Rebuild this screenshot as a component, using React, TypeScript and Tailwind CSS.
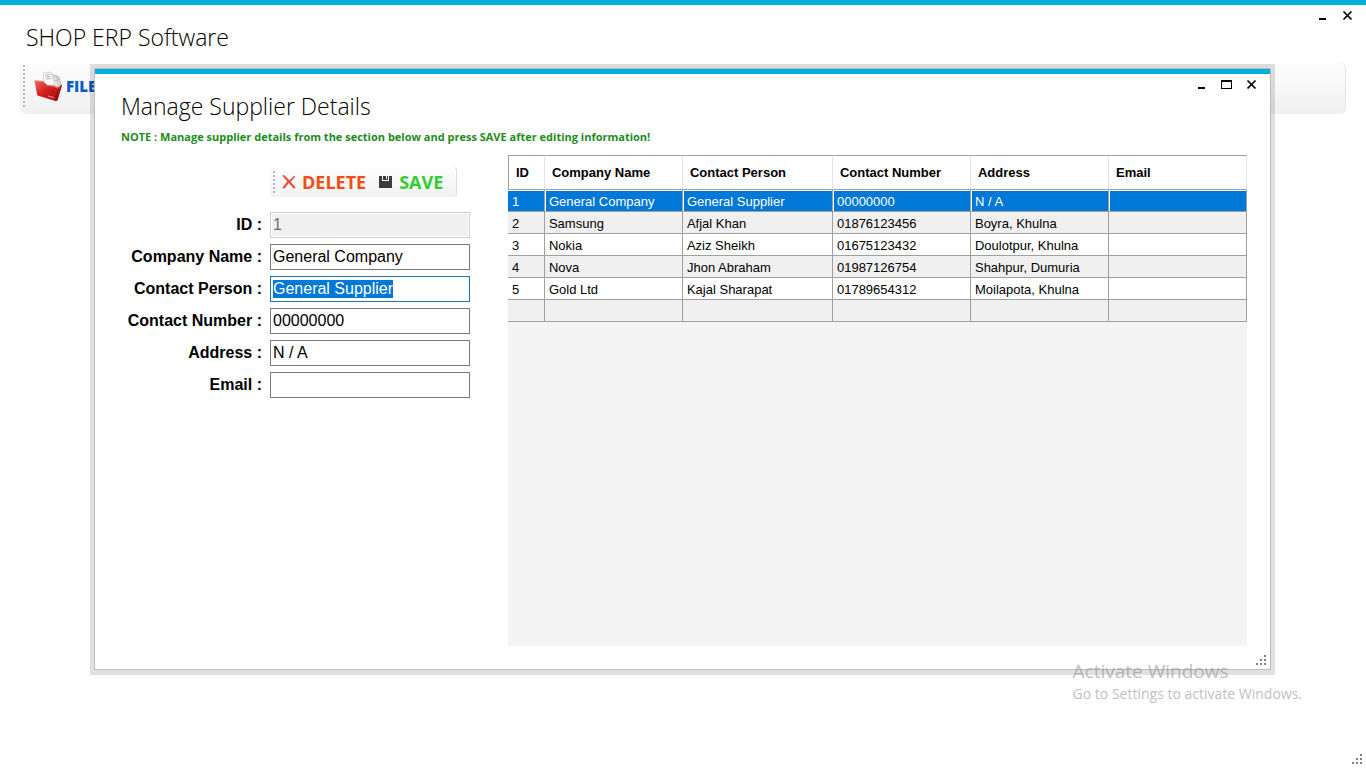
import React, { useEffect, useRef } from 'react';

interface Supplier {
    id: string;
    company: string;
    person: string;
    phone: string;
    address: string;
    email: string;
}

const suppliers: Supplier[] = [
    { id: '1', company: 'General Company', person: 'General Supplier', phone: '00000000', address: 'N / A', email: '' },
    { id: '2', company: 'Samsung', person: 'Afjal Khan', phone: '01876123456', address: 'Boyra, Khulna', email: '' },
    { id: '3', company: 'Nokia', person: 'Aziz Sheikh', phone: '01675123432', address: 'Doulotpur, Khulna', email: '' },
    { id: '4', company: 'Nova', person: 'Jhon Abraham', phone: '01987126754', address: 'Shahpur, Dumuria', email: '' },
    { id: '5', company: 'Gold Ltd', person: 'Kajal Sharapat', phone: '01789654312', address: 'Moilapota, Khulna', email: '' },
    { id: '', company: '', person: '', phone: '', address: '', email: '' },
];

const columns: { key: keyof Supplier; title: string; width: string }[] = [
    { key: 'id', title: 'ID', width: 'w-[5%]' },
    { key: 'company', title: 'Company Name', width: '' },
    { key: 'person', title: 'Contact Person', width: 'w-[150px]' },
    { key: 'phone', title: 'Contact Number', width: '' },
    { key: 'address', title: 'Address', width: '' },
    { key: 'email', title: 'Email', width: '' },
];

const fields: { key: keyof Supplier; label: string }[] = [
    { key: 'id', label: 'ID :' },
    { key: 'company', label: 'Company Name :' },
    { key: 'person', label: 'Contact Person :' },
    { key: 'phone', label: 'Contact Number :' },
    { key: 'address', label: 'Address :' },
    { key: 'email', label: 'Email :' },
];

const MinimizeIcon = () => (
    <svg width="11" height="11" viewBox="0 0 11 11" shapeRendering="crispEdges">
        <rect x="2" y="8" width="7" height="2" fill="#000" />
    </svg>
);

const MaximizeIcon = () => (
    <svg width="11" height="11" viewBox="0 0 11 11" shapeRendering="crispEdges">
        <path d="M0 1h11v9H0zM1 3v6h9V3z" fill="#000" fillRule="evenodd" />
    </svg>
);

const CloseIcon = () => (
    <svg width="11" height="11" viewBox="0 0 11 11">
        <path d="M1.5 1.5l8 8M9.5 1.5l-8 8" stroke="#000" strokeWidth="1.7" />
    </svg>
);

const ResizeGrip: React.FC<{ className: string }> = ({ className }) => (
    <svg className={className} width="10" height="10" viewBox="0 0 10 10" fill="#808080" shapeRendering="crispEdges">
        <path d="M8 0h2v2H8zM4 4h2v2H4zM8 4h2v2H8zM0 8h2v2H0zM4 8h2v2H4zM8 8h2v2H8z" />
    </svg>
);

const FolderIcon = () => (
    <svg width="30" height="32" viewBox="0 0 30 32">
        <defs>
            <linearGradient id="folder" x1="0" y1="0" x2="1" y2="1">
                <stop offset="0" stopColor="#ef6a62" />
                <stop offset="0.45" stopColor="#d41f1f" />
                <stop offset="1" stopColor="#9c0b0f" />
            </linearGradient>
        </defs>
        <path d="M19 11l8 3 .5 2-4 14.500-5-3z" fill="#5d1214" />
        <path d="M20 5l5 2 2.500 9-3.500 6-6-3z" fill="#dedad9" stroke="#a8a3a2" strokeWidth="0.6" />
        <path d="M16 4l6 1.500 2.500 12-6 2-5-4z" fill="#eeebea" stroke="#a8a3a2" strokeWidth="0.6" />
        <path d="M9.500 3l7.500-.8 4.500 15-4 .8-8-4z" fill="#fafafa" stroke="#b9b5b4" strokeWidth="0.6" />
        <path d="M11.500 5l4-.5M11.500 7l5-.6M12 9l5-.6M19.500 7l2 .6M20.500 10l2 .5M24 9l1 .4" stroke="#8f8b8a" strokeWidth="0.7" />
        <path d="M0.400 10.500L9 11l4.500 4 6 .6 5 2 3-3.100c.5.500.5 1 .3 1.600L23.500 30c-.3 1-1 1.300-2 1L4.300 25.800c-.7-.2-1-.6-1.200-1.300z" fill="url(#folder)" />
        <path d="M0.800 10.900L9 11.600l4.500 4 6 .8 5 2" fill="none" stroke="#f59a94" strokeWidth="0.7" />
        <path d="M14 26l6 1.500" stroke="#f3b5b1" strokeWidth="0.8" />
        <path d="M24.500 18.500l-2.800 11.800" stroke="#7d0a0d" strokeWidth="0.8" />
    </svg>
);

const DeleteIcon = () => (
    <svg width="14" height="14" viewBox="0 0 14 14">
        <path d="M0.500 0.600L2.400 0.500 7.300 5.600 12 1.200l1 .6-4.600 5 4.900 5.700-1.400.9-5-5.600-4.500 5.500-1.900-.4 5-6.300z" fill="#e5492f" stroke="#e5492f" strokeWidth="0.4" />
    </svg>
);

const SaveIcon = () => (
    <svg width="13" height="13" viewBox="0 0 13 13" fill="#3c3c3c" shapeRendering="crispEdges">
        <path d="M0 0h3v5h7V0h2l1 1v11H0z" />
        <path d="M4 0h3v4H4zM8 0h1v4H7V3h1z" />
    </svg>
);

const grip = 'w-[2px] bg-[repeating-linear-gradient(#b8b8b8_0_2px,transparent_2px_4px)]';

const DialogForm: React.FC = () => {
    const personRef = useRef<HTMLInputElement>(null);

    useEffect(() => {
        personRef.current?.focus();
        personRef.current?.select();
    }, []);

    return (
        <form className="grid grid-cols-[auto_200px] gap-x-2 gap-y-[6px] items-center content-start pt-3" onSubmit={(e) => e.preventDefault()}>
            <div className="col-start-2 justify-self-start flex items-center h-[30px] pl-[3px] pr-[13px] mb-[9px] rounded bg-linear-to-b from-[#fdfdfd] to-[#f2f2f2] border-r border-[#dddddd] font-['Open_Sans',sans-serif] text-lg font-bold">
                <div className={`h-[22px] mr-[7px] ${grip}`}></div>
                <button type="button" className="flex items-center gap-[6px] mr-[13px] text-[#f04e14]">
                    <DeleteIcon />
                    DELETE
                </button>
                <button type="submit" className="flex items-center gap-[7px] text-[#32cd32]">
                    <SaveIcon />
                    SAVE
                </button>
            </div>
            {fields.map((f) => (
                <React.Fragment key={f.key}>
                    <label htmlFor={f.key} className="w-[141px] text-right text-base font-bold whitespace-nowrap">{f.label}</label>
                    <input
                        id={f.key}
                        ref={f.key === 'person' ? personRef : undefined}
                        defaultValue={suppliers[0][f.key]}
                        disabled={f.key === 'id'}
                        className="w-full h-[26px] px-[2px] text-base bg-white border border-[#7a7a7a] outline-none focus:border-[#1a7ba8] selection:bg-[#0078d7] selection:text-white disabled:bg-[#f0f0f0] disabled:border-[#cccccc] disabled:text-[#6d6d6d] disabled:shadow-[inset_0_0_0_1px_#fff]"
                    />
                </React.Fragment>
            ))}
        </form>
    );
};

const SupplierTable: React.FC = () => (
    <div className="flex-1 bg-[#f4f4f4]">
        <table className="w-full table-fixed border-separate border-spacing-0 text-[13px] leading-4">
            <thead>
                <tr className="h-[35px] bg-white">
                    {columns.map((c) => (
                        <th key={c.key} className={`${c.width} px-[7px] text-left font-bold whitespace-nowrap border-y border-r border-y-[#a0a0a0] border-r-[#e2e4e8] first:border-l first:border-l-[#a0a0a0]`}>
                            {c.title}
                        </th>
                    ))}
                </tr>
            </thead>
            <tbody>
                {suppliers.map((s, i) => (
                    <tr key={i} className={i === 0 ? 'h-[22px] bg-[#0078d7] text-white' : 'h-[22px] bg-white even:bg-[#f0f0f0]'}>
                        {columns.map((c) => (
                            <td
                                key={c.key}
                                className={`px-1 pt-[2px] pb-0 whitespace-nowrap border-b border-r border-[#a0a0a0] ${i === 0 ? 'shadow-[inset_1px_1px_0_#fff] first:shadow-[inset_0_1px_0_#fff]' : ''}`}
                            >
                                {s[c.key]}
                            </td>
                        ))}
                    </tr>
                ))}
            </tbody>
        </table>
    </div>
);

const SupplierDialog: React.FC = () => (
    <div role="dialog" aria-labelledby="dialog-title" className="absolute top-16 bottom-[93px] left-[90px] right-[91px] border-4 border-b-[5px] border-black/12">
        <div className="relative h-full flex flex-col bg-white border border-[#bdbdbd]">
            <div className="h-[5px] bg-[#00aedb]"></div>
            <div className="flex justify-between pl-[26px] pr-[13px]">
                <h2 id="dialog-title" className="pt-4 text-[23px] leading-8 font-light font-['Open_Sans',sans-serif]">Manage Supplier Details</h2>
                <div className="flex items-start gap-[14px] pt-[5px]">
                    <button aria-label="Minimize"><MinimizeIcon /></button>
                    <button aria-label="Maximize"><MaximizeIcon /></button>
                    <button aria-label="Close"><CloseIcon /></button>
                </div>
            </div>
            <p className="pl-[26px] pt-[5px] text-[11px] leading-5 font-bold text-[#228b22] font-['Open_Sans',sans-serif]">
                NOTE : Manage supplier details from the section below and press SAVE after editing information!
            </p>
            <div className="flex-1 flex gap-[38px] pl-[26px] pr-[23px] pt-2 pb-[23px]">
                <DialogForm />
                <SupplierTable />
            </div>
            <ResizeGrip className="absolute right-1 bottom-1" />
        </div>
    </div>
);

const App: React.FC = () => {
    return (
        <div className="relative min-h-screen overflow-hidden bg-white text-black font-['Liberation_Sans',sans-serif]">
            <div className="h-[5px] bg-[#00aedb]"></div>
            <header className="flex justify-between pl-[26px] pr-[13px]">
                <h1 className="pt-4 text-[23px] leading-8 font-light font-['Open_Sans',sans-serif]">SHOP ERP Software</h1>
                <div className="flex items-start gap-[14px] pt-[5px]">
                    <button aria-label="Minimize"><MinimizeIcon /></button>
                    <button aria-label="Close"><CloseIcon /></button>
                </div>
            </header>
            <nav className="flex items-center h-[52px] mt-[9px] mx-5 pl-[3px] pb-1 rounded-md bg-linear-to-b from-[#fdfdfd] via-[#f7f7f7] to-[#f0f0f0] border-r border-[#e4e4e4]">
                <div className={`h-[42px] mr-[9px] ${grip}`}></div>
                <button className="flex items-center gap-[2px] text-[15px] font-extrabold text-[#0a5cc4] font-['Open_Sans',sans-serif]">
                    <FolderIcon />
                    FILE
                </button>
            </nav>

            <SupplierDialog />

            <div className="absolute right-16 bottom-[63px] text-[#888]/55 font-['Open_Sans',sans-serif] pointer-events-none">
                <p className="text-[19px] leading-6">Activate Windows</p>
                <p className="text-sm leading-[22px]">Go to Settings to activate Windows.</p>
            </div>
            <ResizeGrip className="absolute right-1 bottom-1" />
        </div>
    );
};

export default App;
